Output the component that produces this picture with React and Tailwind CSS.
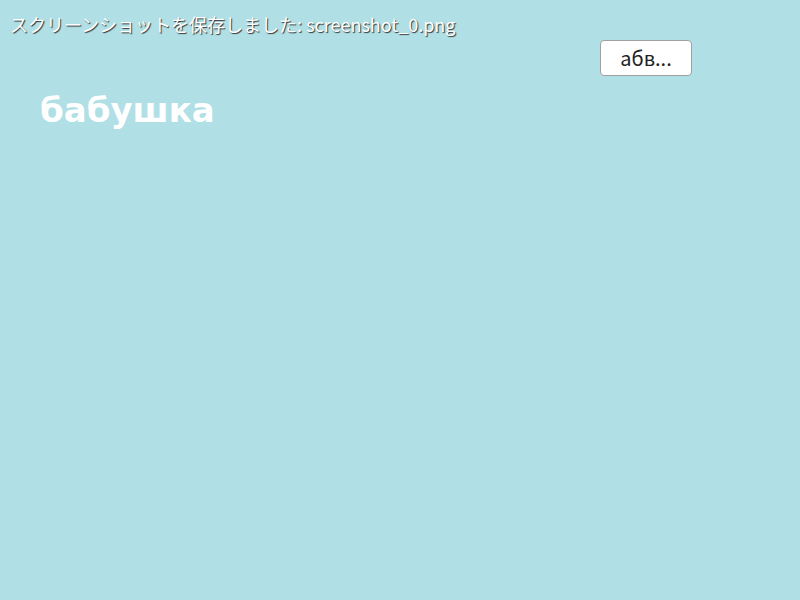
export default function App() {
    return (
        <div className="w-[800px] h-[600px] bg-[#b0e0e6] font-['Noto_Sans_CJK_JP',sans-serif] overflow-hidden">
            {/* status line */}
            <div className="pl-[10px] pt-[10px] text-[18px] leading-[28px] text-white [text-shadow:1px_1px_1px_#333]">
                スクリーンショットを保存しました: screenshot_0.png
            </div>

            <div className="flex justify-end pr-[108px] mt-[2px]">
                <button className="w-[92px] h-[36px] bg-white border border-[#a0a0a0] rounded-[4px] text-[20px] text-[#222]">
                    абв...
                </button>
            </div>

            <h1 className="pl-[40px] mt-[12px] text-[34px] leading-[44px] font-bold text-white font-['DejaVu_Sans',sans-serif]">
                бабушка
            </h1>
        </div>
    );
}
